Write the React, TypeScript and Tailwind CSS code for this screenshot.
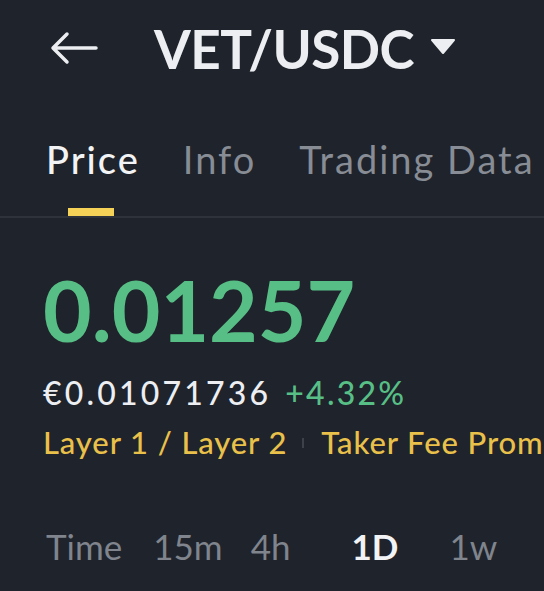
import React from "react";

const tabs = ["Price", "Info", "Trading Data"];
const times = [
  { label: "Time", active: false, gap: "mr-[31px]" },
  { label: "15m", active: false, gap: "mr-[28px]" },
  { label: "4h", active: false, gap: "mr-[61px]" },
  { label: "1D", active: true, gap: "mr-[51px]" },
  { label: "1w", active: false, gap: "" },
];

const Header = () => {
  return (
    <div className="flex items-center h-[96px] pl-[50px]">
      <svg width="48" height="36" viewBox="0 0 48 36" fill="none" className="mr-[56px]">
        <path
          d="M46 18H3M17 4L3 18l14 14"
          stroke="#eceef2"
          strokeWidth="3.5"
          strokeLinecap="round"
          strokeLinejoin="round"
        />
      </svg>
      <h1 className="text-[53px] font-bold tracking-[-0.5px] text-[#eceef2] leading-none">
        VET/USDC
      </h1>
      <svg width="26" height="17" viewBox="0 0 26 17" className="ml-[16px] mt-[-4px]">
        <path d="M2 2h22L13 15z" fill="#eceef2" strokeLinejoin="round" stroke="#eceef2" strokeWidth="2" />
      </svg>
    </div>
  );
};

const Tabs = () => {
  return (
    <div className="border-b-2 border-[#2e333b]">
      <div className="flex gap-[43px] pl-[46px] pt-[40px]">
        {tabs.map((t, i) => (
          <div key={t} className="flex flex-col items-center">
            <span
              className={
                "text-[38px] leading-[46px] tracking-[2px] whitespace-nowrap " +
                (i === 0 ? "text-[#f2f3f5] font-medium" : "text-[#878c95]")
              }
            >
              {t}
            </span>
            <div
              className={
                "h-[8px] w-[46px] mt-[26px] mr-[4px] " + (i === 0 ? "bg-[#f5d157]" : "bg-transparent")
              }
            ></div>
          </div>
        ))}
      </div>
    </div>
  );
};

const Ticker = () => {
  return (
    <div className="pl-[43px] pt-[50px]">
      <p className="text-[84px] font-bold leading-none text-[#57bf86]">0.01257</p>
      <div className="flex items-baseline gap-[14px] mt-[25px] text-[32px] leading-none font-medium">
        <span className="text-[#eceef2] tracking-[3.2px]">€0.01071736</span>
        <span className="text-[#57bf86] tracking-[2.2px]">+4.32%</span>
      </div>
      <div className="flex items-center mt-[18px] text-[31px] leading-none font-medium tracking-[0.9px] text-[#e9c04a] whitespace-nowrap">
        <span>Layer 1 / Layer 2</span>
        <div className="w-[2px] h-[10px] bg-[#3c414a] ml-[15px] mr-[17px] shrink-0"></div>
        <span>Taker Fee Promo</span>
      </div>
    </div>
  );
};

const TimeRow = () => {
  return (
    <div className="flex items-center pl-[46px] pt-[71px] text-[35px] leading-none">
      {times.map((t) => (
        <span
          key={t.label}
          className={(t.active ? "text-[#f2f3f5] font-bold" : "text-[#7f848d]") + " " + t.gap}
        >
          {t.label}
        </span>
      ))}
    </div>
  );
};

export default function App() {
  return (
    <div
      className="w-[544px] h-[591px] overflow-hidden bg-[#1f232b]"
      style={{ fontFamily: "Lato, 'Open Sans', sans-serif" }}
    >
      <Header />
      <Tabs />
      <Ticker />
      <TimeRow />
    </div>
  );
}
